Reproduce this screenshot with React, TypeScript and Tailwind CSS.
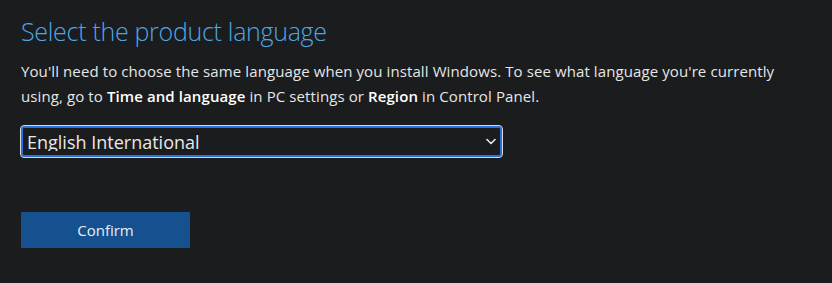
import React, { useState } from 'react';

const languages = ['Arabic', 'English (United States)', 'English International', 'French', 'German', 'Spanish'];

const App: React.FC = () => {
  const [lang, setLang] = useState('English International');

  return (
    <div
      className="min-h-screen w-full bg-[#1b1c1e] px-[21px] pt-[14px] text-[#e8e8e8]"
      style={{ fontFamily: '"Open Sans", "Noto Sans", sans-serif' }}
    >
      {/* Heading */}
      <h1 className="text-[25px] font-light leading-[34px] text-[#4ea6e3] tracking-[-0.3px]">
        Select the product language
      </h1>

      <p className="mt-[11px] text-[15px] leading-[25px] text-[#e6e6e6] tracking-[0.1px]">
        You'll need to choose the same language when you install Windows. To see what language you're currently
        <br />
        using, go to <b className="font-semibold text-white">Time and language</b> in PC settings or{' '}
        <b className="font-semibold text-white">Region</b> in Control Panel.
      </p>

      {/* Language picker */}
      <div className="relative mt-[17px] w-[481px]">
        <select
          value={lang}
          onChange={(e) => setLang(e.target.value)}
          className="h-[31px] w-full appearance-none rounded-[3px] border-2 border-[#2a6fdb] bg-[#1b1c1e] pl-[4px] pr-8 text-[18px] leading-none text-[#e8e8e8] outline outline-1 outline-[#d8d8d8]"
        >
          {languages.map((l) => (
            <option key={l} value={l}>
              {l}
            </option>
          ))}
        </select>
        <svg
          className="pointer-events-none absolute right-[6px] top-[12px]"
          width="10"
          height="7"
          viewBox="0 0 10 7"
          fill="none"
        >
          <path d="M1 1.5 L5 5.5 L9 1.5" stroke="#e8e8e8" strokeWidth="1.6" strokeLinecap="round" strokeLinejoin="round" />
        </svg>
      </div>

      <button className="mt-[55px] h-[36px] w-[169px] bg-[#15518f] text-[15px] text-[#e8eef5]">
        Confirm
      </button>
    </div>
  );
};

export default App;
